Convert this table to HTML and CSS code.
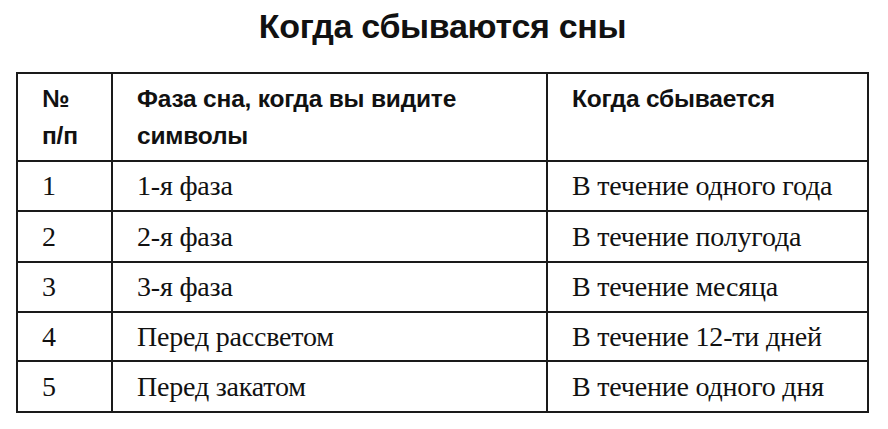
FILE: index.html
```html
<!DOCTYPE html>
<html lang="ru">
<head>
<meta charset="utf-8">
<title>Когда сбываются сны</title>
<link rel="stylesheet" href="styles.css">
</head>
<body>
<div class="page">
  <h1 class="title">Когда сбываются сны</h1>
  <div class="table" role="table">
    <div class="cell head" role="columnheader">№<br>п/п</div>
    <div class="cell head" role="columnheader">Фаза сна, когда вы видите<br>символы</div>
    <div class="cell head" role="columnheader">Когда сбывается</div>

    <div class="cell" role="cell">1</div>
    <div class="cell" role="cell">1-я фаза</div>
    <div class="cell" role="cell">В течение одного года</div>

    <div class="cell" role="cell">2</div>
    <div class="cell" role="cell">2-я фаза</div>
    <div class="cell" role="cell">В течение полугода</div>

    <div class="cell" role="cell">3</div>
    <div class="cell" role="cell">3-я фаза</div>
    <div class="cell" role="cell">В течение месяца</div>

    <div class="cell" role="cell">4</div>
    <div class="cell" role="cell">Перед рассветом</div>
    <div class="cell" role="cell">В течение 12-ти дней</div>

    <div class="cell" role="cell">5</div>
    <div class="cell" role="cell">Перед закатом</div>
    <div class="cell" role="cell">В течение одного дня</div>
  </div>
</div>
</body>
</html>
```

FILE: styles.css
```css
html, body {
  margin: 0;
  padding: 0;
  background: #ffffff;
}

.page {
  width: 888px;
  height: 429px;
  padding: 6px 0 0 16px;
  box-sizing: border-box;
  color: #111111;
}

.title {
  margin: 0 0 26px 0;
  width: 853px;
  text-align: center;
  font-family: "Liberation Sans", Arial, sans-serif;
  font-weight: bold;
  font-size: 34px;
  line-height: 40px;
  letter-spacing: -0.3px;
}

.table {
  display: grid;
  width: 853px;
  box-sizing: border-box;
  grid-template-columns: 93px 433px 319px;
  grid-template-rows: 86px 48px 49px 48px 47px 49px;
  gap: 2px;
  padding: 2px;
  background: #1a1a1a;
}

.cell {
  background: #ffffff;
  padding-left: 24px;
  display: flex;
  align-items: center;
  font-family: "Liberation Serif", "Times New Roman", serif;
  font-size: 28px;
  letter-spacing: -0.2px;
  white-space: nowrap;
}

.head {
  display: block;
  padding-top: 6px;
  font-family: "Liberation Sans", Arial, sans-serif;
  font-weight: bold;
  font-size: 24.5px;
  line-height: 37px;
  letter-spacing: -0.2px;
}
```
